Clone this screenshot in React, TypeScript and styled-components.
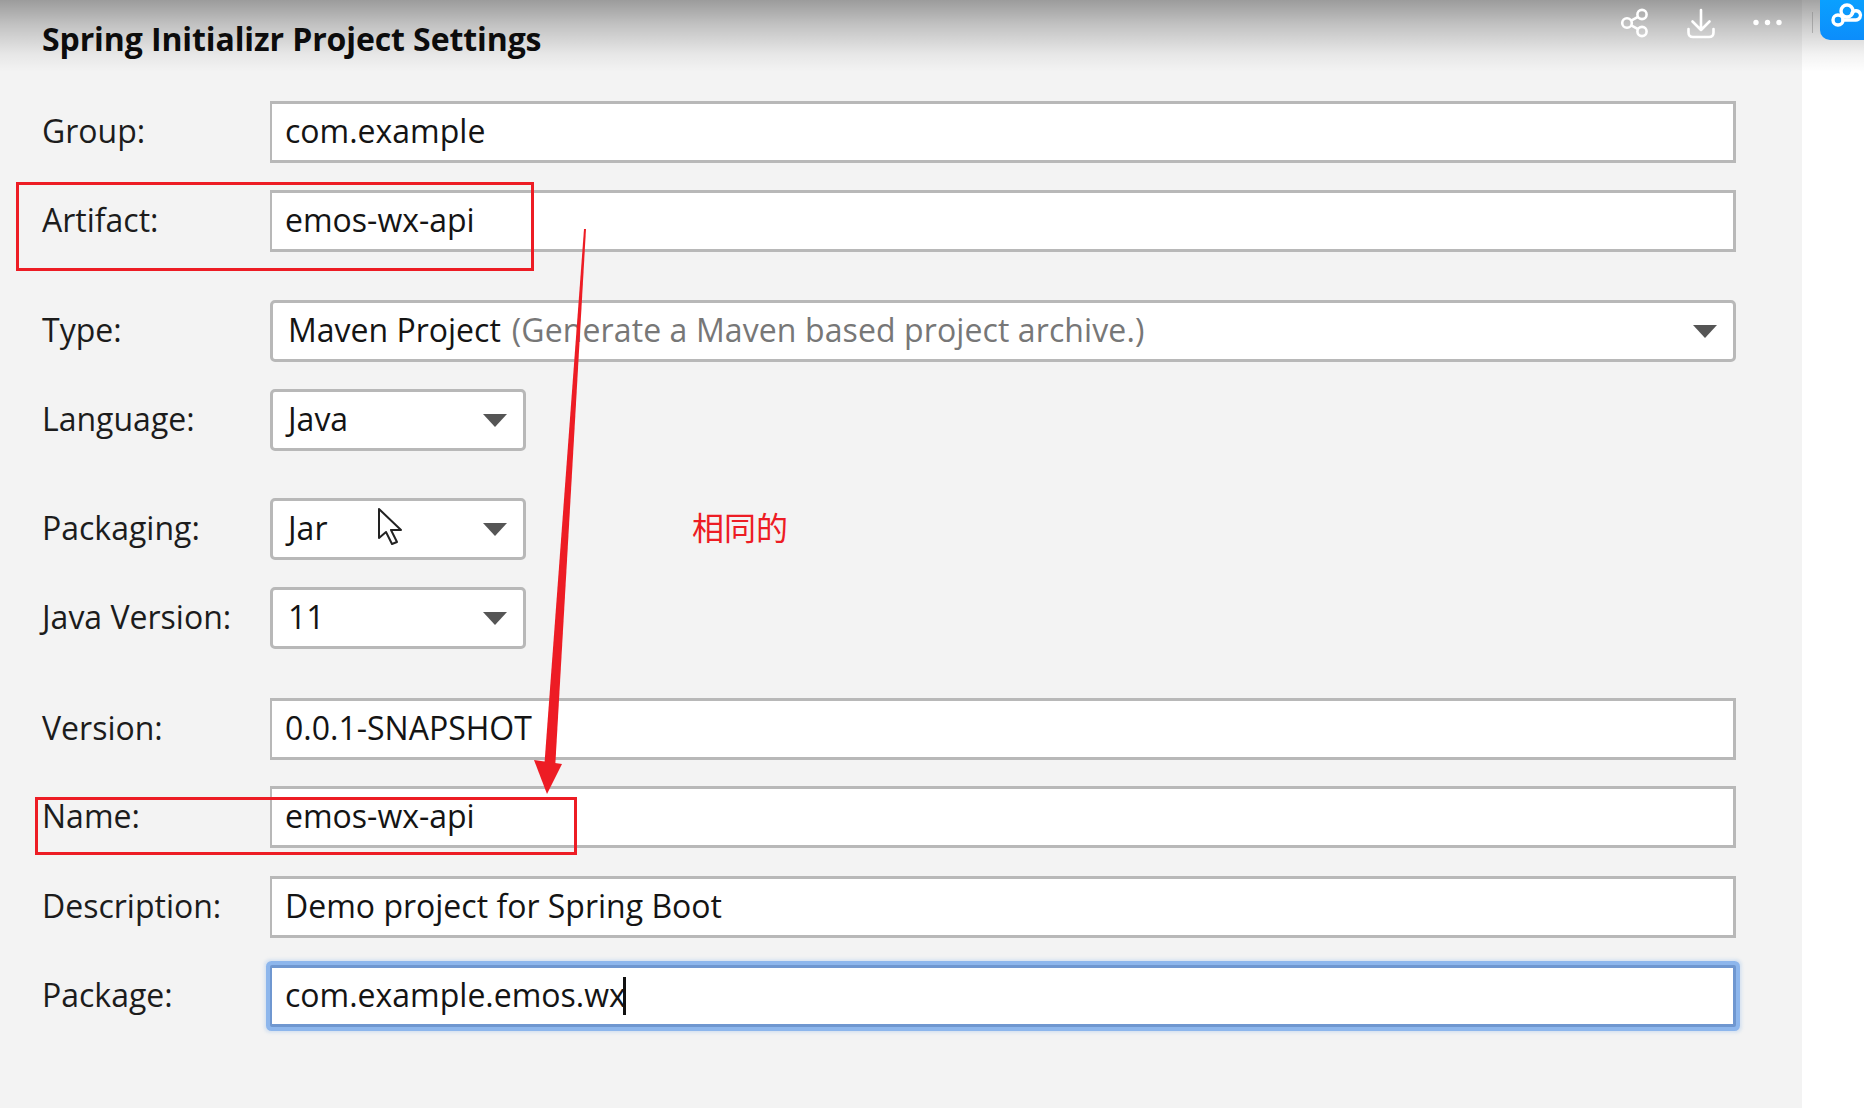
import * as React from "react";
import styled, { createGlobalStyle } from "styled-components";

const GlobalStyle = createGlobalStyle`
    html, body {
        margin: 0;
        padding: 0;
        background: #ffffff;
    }
    body {
        font-family: "Open Sans", "Noto Sans", "Noto Sans CJK SC", sans-serif;
        color: #111111;
    }
`;

const Page = styled.div`
    position: relative;
    width: 1864px;
    height: 1108px;
    overflow: hidden;
    background: #ffffff;
`;

const Panel = styled.div`
    width: 1802px;
    height: 1108px;
    box-sizing: border-box;
    padding: 0 0 0 42px;
    background: #f3f3f3;
`;

const Title = styled.h1`
    position: relative;
    z-index: 2;
    margin: 0;
    height: 101px;
    padding-top: 17px;
    box-sizing: border-box;
    font-size: 32px;
    line-height: 44px;
    font-weight: 700;
    letter-spacing: -0.1px;
    white-space: nowrap;
    color: #0c0c0c;
`;

const TopShade = styled.div`
    position: absolute;
    z-index: 1;
    top: 0;
    left: 0;
    right: 0;
    height: 72px;
    pointer-events: none;
    background: linear-gradient(
        to bottom,
        rgba(0, 0, 0, 0.36) 0%,
        rgba(0, 0, 0, 0.2) 35%,
        rgba(0, 0, 0, 0.05) 75%,
        rgba(0, 0, 0, 0) 100%
    );
`;

const Row = styled.div<{ $gap: number }>`
    display: flex;
    align-items: center;
    height: 62px;
    margin-top: ${p => p.$gap}px;
`;

const Label = styled.label`
    flex: 0 0 228px;
    padding-bottom: 3px;
    font-size: 32px;
    color: #1c1c1c;
    white-space: nowrap;
`;

const Field = styled.div<{ $focused?: boolean }>`
    display: flex;
    align-items: center;
    width: 1466px;
    height: 62px;
    box-sizing: border-box;
    padding: 0 0 3px 13px;
    background: #ffffff;
    font-size: 32px;
    color: #141414;
    border: ${p => (p.$focused ? "3px solid #6f97d0" : "3px solid #b8b8b8")};
    border-left-width: 2px;
    box-shadow: ${p => (p.$focused ? "0 0 0 4px #8db6ec, 0 0 3px 6px rgba(141, 182, 236, 0.25)" : "none")};
    border-radius: ${p => (p.$focused ? "2px" : "0")};
`;

const Caret = styled.span`
    display: inline-block;
    width: 3px;
    height: 38px;
    margin: 3px 0 0 -3px;
    background: #111111;
`;

const Select = styled.div<{ $wide?: boolean }>`
    display: flex;
    align-items: center;
    justify-content: space-between;
    width: ${p => (p.$wide ? "1466px" : "256px")};
    height: 62px;
    box-sizing: border-box;
    padding: 0 16px 0 15px;
    background: #ffffff;
    border: 3px solid #b8b8b8;
    border-radius: 5px;
    font-size: 32px;
    color: #141414;
`;

const SelectText = styled.span`
    padding-bottom: 3px;
    white-space: nowrap;
`;

const Hint = styled.span`
    margin-left: 11px;
    letter-spacing: 0.1px;
    color: #777777;
`;

const Caret3 = styled.span`
    width: 0;
    height: 0;
    border-left: 12px solid transparent;
    border-right: 12px solid transparent;
    border-top: 13px solid #555555;
`;

const RedBox = styled.div<{ $x: number; $y: number; $w: number; $h: number }>`
    position: absolute;
    z-index: 3;
    left: ${p => p.$x}px;
    top: ${p => p.$y}px;
    width: ${p => p.$w}px;
    height: ${p => p.$h}px;
    box-sizing: border-box;
    border: 3px solid #ed1c24;
    pointer-events: none;
`;

const Note = styled.div`
    position: absolute;
    z-index: 3;
    left: 692px;
    top: 504px;
    font-family: "Noto Sans CJK SC", sans-serif;
    font-size: 32px;
    line-height: 44px;
    color: #ed1c24;
`;

const Overlay = styled.svg`
    position: absolute;
    z-index: 3;
    left: 0;
    top: 0;
    pointer-events: none;
`;

const ToolIcons = styled.div`
    position: absolute;
    z-index: 4;
    top: 6px;
    left: 1618px;
    display: flex;
    align-items: center;
    gap: 32px;
    height: 34px;
    color: #ffffff;
`;

const Divider = styled.div`
    position: absolute;
    z-index: 4;
    left: 1812px;
    top: 12px;
    width: 1px;
    height: 21px;
    background: rgba(130, 130, 130, 0.5);
`;

const CloudButton = styled.div`
    position: absolute;
    z-index: 4;
    top: 0;
    right: 0;
    width: 44px;
    height: 40px;
    display: flex;
    align-items: flex-start;
    justify-content: flex-start;
    background: linear-gradient(to bottom, #0aa0ff, #0c8dfb);
    border-bottom-left-radius: 10px;
`;

const ShareIcon = () => (
    <svg width="34" height="34" viewBox="0 0 34 34" fill="none" stroke="currentColor" strokeWidth="2.6">
        <circle cx="9" cy="17" r="4.8" />
        <circle cx="24" cy="8.5" r="4.6" />
        <circle cx="24" cy="25.5" r="4.6" />
        <path d="M13.2 14.6 L20 10.8 M13.2 19.4 L20 23.2" />
    </svg>
);

const DownloadIcon = () => (
    <svg width="34" height="34" viewBox="0 0 34 34" fill="none" stroke="currentColor" strokeWidth="2.6" strokeLinecap="round" strokeLinejoin="round">
        <path d="M17 4 V24 M8.5 15.5 L17 24 L25.5 15.5" />
        <path d="M4.5 23 V26.5 Q4.5 31 9 31 H25 Q29.5 31 29.5 26.5 V23" />
    </svg>
);

const MoreIcon = () => (
    <svg width="34" height="34" viewBox="0 0 34 34" fill="currentColor">
        <circle cx="6" cy="16.5" r="2.7" />
        <circle cx="17.5" cy="16.5" r="2.7" />
        <circle cx="29" cy="16.5" r="2.7" />
    </svg>
);

// three linked rings, the right one left open at the bottom
const CloudLogo = () => (
    <svg width="44" height="32" viewBox="0 0 44 32" fill="none" stroke="#ffffff" strokeWidth="3.4" strokeLinecap="round">
        <circle cx="27" cy="11" r="6" />
        <circle cx="18" cy="20" r="5" />
        <path d="M23 20 H36 a4.6 4.6 0 1 0 -4 -7" />
    </svg>
);

const Pointer = styled.svg`
    position: absolute;
    z-index: 3;
    left: 377px;
    top: 507px;
`;

const rows = [
    { label: "Group:", gap: 0, value: "com.example" },
    { label: "Artifact:", gap: 27, value: "emos-wx-api" },
    { label: "Type:", gap: 48, value: "Maven Project", hint: "(Generate a Maven based project archive.)", select: "wide" },
    { label: "Language:", gap: 27, value: "Java", select: "small" },
    { label: "Packaging:", gap: 47, value: "Jar", select: "small" },
    { label: "Java Version:", gap: 27, value: "11", select: "small" },
    { label: "Version:", gap: 49, value: "0.0.1-SNAPSHOT" },
    { label: "Name:", gap: 26, value: "emos-wx-api" },
    { label: "Description:", gap: 28, value: "Demo project for Spring Boot" },
    { label: "Package:", gap: 27, value: "com.example.emos.wx", focused: true }
];

export default function App() {
    return (
        <Page>
            <GlobalStyle />
            <Panel>
                <Title>Spring Initializr Project Settings</Title>
                {rows.map(row => (
                    <Row key={row.label} $gap={row.gap}>
                        <Label>{row.label}</Label>
                        {row.select ? (
                            <Select $wide={row.select === "wide"}>
                                <SelectText>
                                    {row.value}
                                    {row.hint && <Hint>{row.hint}</Hint>}
                                </SelectText>
                                <Caret3 />
                            </Select>
                        ) : (
                            <Field $focused={row.focused}>
                                {row.value}
                                {row.focused && <Caret />}
                            </Field>
                        )}
                    </Row>
                ))}
            </Panel>
            <TopShade />
            <ToolIcons>
                <ShareIcon />
                <DownloadIcon />
                <MoreIcon />
            </ToolIcons>
            <Divider />
            <CloudButton>
                <CloudLogo />
            </CloudButton>
            <RedBox $x={16} $y={182} $w={518} $h={89} />
            <RedBox $x={35} $y={797} $w={542} $h={58} />
            <Note>相同的</Note>
            <Overlay width="1864" height="1108" viewBox="0 0 1864 1108">
                <path d="M584 229 L586 229 L555 770 L544 770 Z" fill="#ed1c24" />
                <path d="M534 760 L562 764 L547 794 Z" fill="#ed1c24" />
            </Overlay>
            <Pointer width="26" height="40" viewBox="0 0 26 40">
                <path
                    d="M2 2 L2 31 L9 25 L15 37 L20 35 L14 23 L24 23 Z"
                    fill="#ffffff"
                    stroke="#222222"
                    strokeWidth="2"
                    strokeLinejoin="round"
                />
            </Pointer>
        </Page>
    );
}
